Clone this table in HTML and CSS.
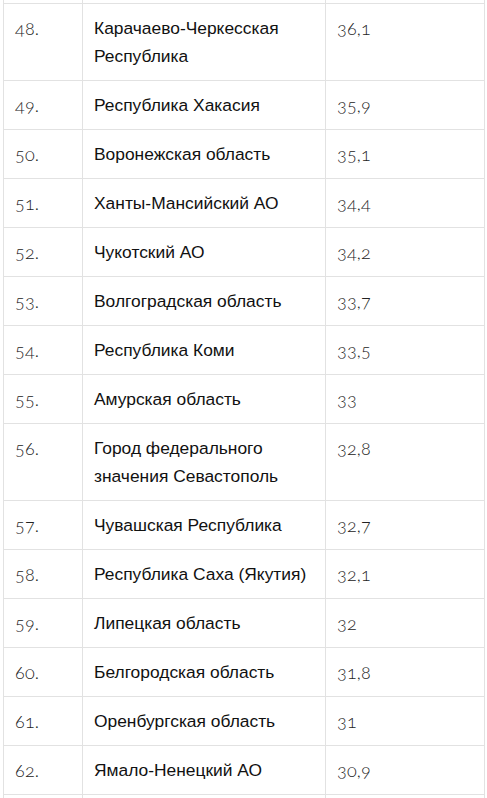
FILE: index.html
```html
<!DOCTYPE html>
<html lang="ru">
<head>
<meta charset="utf-8">
<link rel="stylesheet" href="styles.css">
</head>
<body>
<table class="rating">
  <colgroup><col class="c-num"><col class="c-name"><col class="c-val"></colgroup>
  <tr class="cut"><td></td><td></td><td></td></tr>
  <tr><td class="num">48.</td><td class="name">Карачаево-Черкесская Республика</td><td class="val">36,1</td></tr>
  <tr><td class="num">49.</td><td class="name">Республика Хакасия</td><td class="val">35,9</td></tr>
  <tr><td class="num">50.</td><td class="name">Воронежская область</td><td class="val">35,1</td></tr>
  <tr><td class="num">51.</td><td class="name">Ханты-Мансийский АО</td><td class="val">34,4</td></tr>
  <tr><td class="num">52.</td><td class="name">Чукотский АО</td><td class="val">34,2</td></tr>
  <tr><td class="num">53.</td><td class="name">Волгоградская область</td><td class="val">33,7</td></tr>
  <tr><td class="num">54.</td><td class="name">Республика Коми</td><td class="val">33,5</td></tr>
  <tr><td class="num">55.</td><td class="name">Амурская область</td><td class="val">33</td></tr>
  <tr><td class="num">56.</td><td class="name">Город федерального значения Севастополь</td><td class="val">32,8</td></tr>
  <tr><td class="num">57.</td><td class="name">Чувашская Республика</td><td class="val">32,7</td></tr>
  <tr><td class="num">58.</td><td class="name">Республика Саха (Якутия)</td><td class="val">32,1</td></tr>
  <tr><td class="num">59.</td><td class="name">Липецкая область</td><td class="val">32</td></tr>
  <tr><td class="num">60.</td><td class="name">Белгородская область</td><td class="val">31,8</td></tr>
  <tr><td class="num">61.</td><td class="name">Оренбургская область</td><td class="val">31</td></tr>
  <tr><td class="num">62.</td><td class="name">Ямало-Ненецкий АО</td><td class="val">30,9</td></tr>
  <tr><td class="num"></td><td class="name"></td><td class="val"></td></tr>
</table>
</body>
</html>
```
FILE: styles.css
```css
html, body {
  margin: 0;
  padding: 0;
  background: #fff;
}
body {
  padding-left: 3px;
  overflow: hidden;
  height: 798px;
}
.rating {
  border-collapse: collapse;
  table-layout: fixed;
  width: 481px;
  font-size: 17px;
  line-height: 28px;
}
.c-num { width: 79px; }
.c-name { width: 243px; }
.c-val { width: 159px; }
.rating td {
  border: 1px solid #e2e2e2;
  padding: 10px 10px 10px 11px;
  vertical-align: top;
}
.rating tr.cut td {
  padding: 0;
  height: 3px;
  border-top: none;
}
.num, .val {
  font-family: Lato, "Open Sans", sans-serif;
  font-weight: 300;
  font-size: 18px;
  color: #222;
  font-variant-numeric: oldstyle-nums;
  letter-spacing: 0.2px;
}
.num { padding-left: 10px; }
.name {
  font-family: "Liberation Sans", Arial, sans-serif;
  font-size: 17.4px;
  color: #111;
}
```
